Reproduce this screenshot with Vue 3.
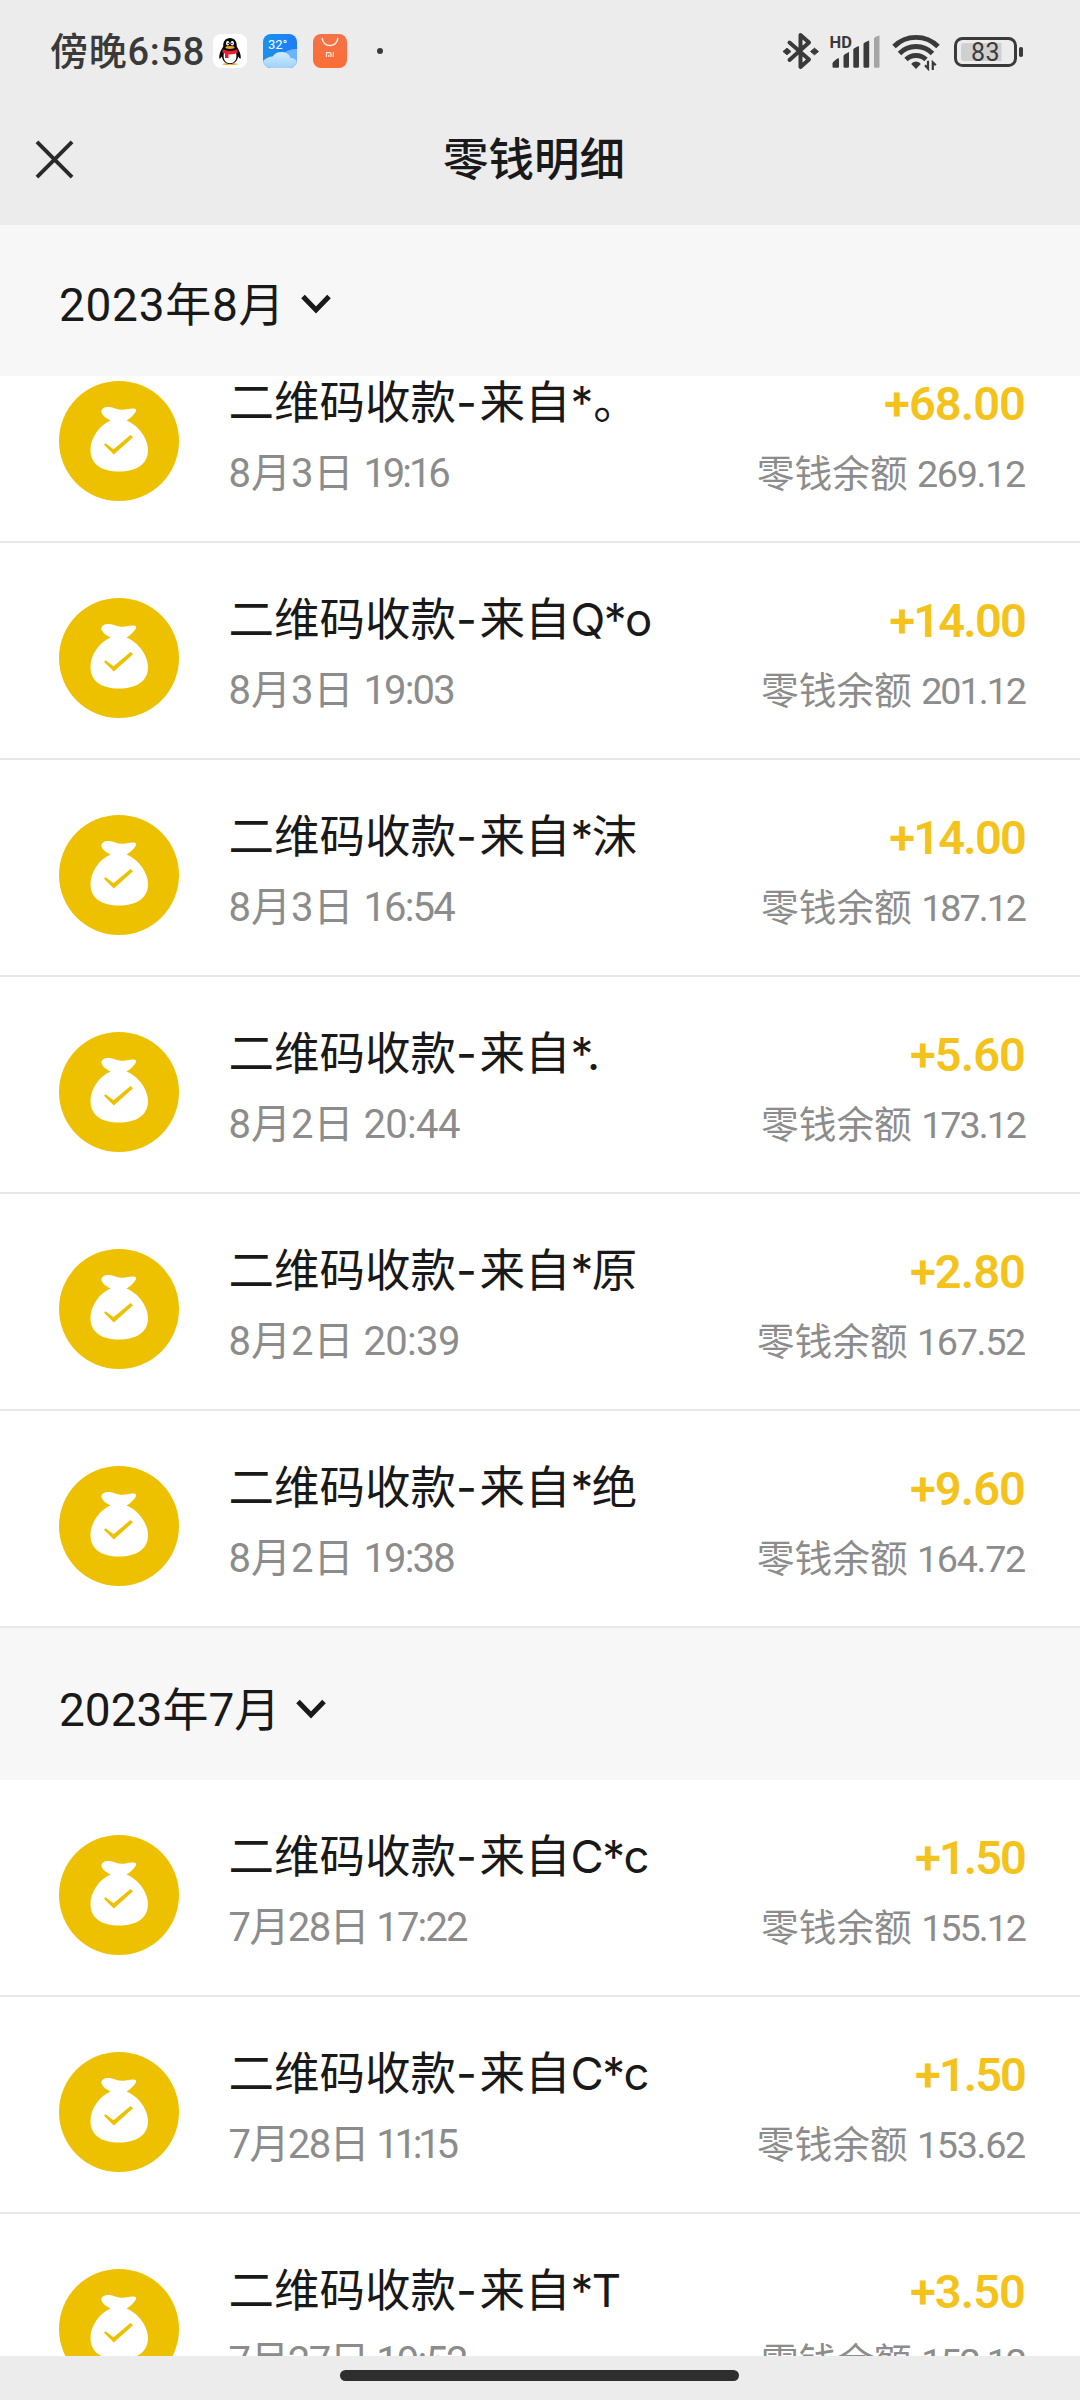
<script setup>
// Keeps the figure "1" narrow by tightening the run in proportion to how many it holds.
const digits = (text, size, narrow = 0.11, base = 0.016) => {
  const ones = (text.match(/1/g) || []).length
  return { letterSpacing: `${(-(ones * size * narrow) / text.length - size * base).toFixed(2)}px` }
}

const august = [
  { payer: '*。', day: '8月3日', time: '19:16', amount: '+68.00', balance: '269.12' },
  { payer: 'Q*o', day: '8月3日', time: '19:03', amount: '+14.00', balance: '201.12' },
  { payer: '*沫', day: '8月3日', time: '16:54', amount: '+14.00', balance: '187.12' },
  { payer: '*.', day: '8月2日', time: '20:44', amount: '+5.60', balance: '173.12' },
  { payer: '*原', day: '8月2日', time: '20:39', amount: '+2.80', balance: '167.52' },
  { payer: '*绝', day: '8月2日', time: '19:38', amount: '+9.60', balance: '164.72' },
]
const july = [
  { payer: 'C*c', day: '7月28日', time: '17:22', amount: '+1.50', balance: '155.12' },
  { payer: 'C*c', day: '7月28日', time: '11:15', amount: '+1.50', balance: '153.62' },
  { payer: '*T', day: '7月27日', time: '19:52', amount: '+3.50', balance: '152.12' },
]
const groups = [
  { id: 8, title: '', rows: august },
  { id: 7, title: '2023年7月', rows: july },
]
</script>

<template>
  <div class="screen">
    <header class="top">
      <div class="status">
        <span class="clock">傍晚6:58</span>
        <svg class="app" viewBox="0 0 34 34">
          <rect width="34" height="34" rx="8" fill="#fff" />
          <path d="M9 30.3q4-2.3 8 0 4-2.3 8 0-3.500 1.400-8 .4-4.500 1-8-.4z" fill="#f5a01a" />
          <path d="M17 4c-4.600 0-7 3.500-6.800 8.500C8 16 6 20 6.200 24c.3 1.400 1.500.2 2.600-1.500C10 28 13 30 17 30s7-2 8.200-7.500c1.100 1.700 2.300 2.900 2.600 1.500.2-4-1.800-8-4-11.500C24 7.500 21.600 4 17 4z" fill="#080808" />
          <path d="M11 18.500C9.500 25 12 29.300 17 29.300s7.500-4.300 6-10.800z" fill="#fff" />
          <path d="M9.800 15.300q7.200 3.500 14.400 0l.6 3.200q-4.500 2.300-9.300 1.800v3.700h-3.500v-4.500l-2.700-1z" fill="#e3202b" />
          <ellipse cx="14.700" cy="9.200" rx="1.700" ry="2.200" fill="#fff" />
          <ellipse cx="19.300" cy="9.200" rx="1.700" ry="2.200" fill="#fff" />
          <circle cx="15.200" cy="9.500" r=".8" fill="#000" />
          <circle cx="18.900" cy="9.500" r=".8" fill="#000" />
          <ellipse cx="17" cy="13.500" rx="4.600" ry="1.400" fill="#f5a623" />
        </svg>
        <svg class="app" viewBox="0 0 34 34">
          <defs>
            <linearGradient id="sky" x1="0" y1="0" x2="1" y2="0">
              <stop offset="0" stop-color="#1a90ee" /><stop offset="1" stop-color="#1d7df6" />
            </linearGradient>
            <linearGradient id="cloud" x1="0" y1="0" x2="0" y2="1">
              <stop offset="0" stop-color="#d3eafd" /><stop offset="1" stop-color="#9fd2fb" />
            </linearGradient>
            <clipPath id="tile"><rect width="34" height="34" rx="8" /></clipPath>
          </defs>
          <g clip-path="url(#tile)">
            <rect width="34" height="34" fill="url(#sky)" />
            <path d="M20 20c3-3.500 8-5 14-5v19H20z" fill="#6cb4fa" />
            <path d="M0 27c3-3 6-4.500 9.500-4.500C12 18.500 16 17.500 20 18c4 .5 6.500 3 7.500 6 3 .2 5 1.500 6.500 3v7H0z" fill="url(#cloud)" />
          </g>
          <text x="5" y="15.300" class="degree">32°</text>
        </svg>
        <svg class="app" viewBox="0 0 34 34">
          <defs>
            <linearGradient id="shop" x1="0" y1="0" x2="0" y2="1">
              <stop offset="0" stop-color="#f37349" /><stop offset="1" stop-color="#fb6d35" />
            </linearGradient>
          </defs>
          <rect width="34" height="34" rx="8" fill="url(#shop)" />
          <path d="M9.300 4.500a7.700 7 0 0 0 15.400 0" fill="none" stroke="#fff1e9" stroke-width="1.500" stroke-linecap="round" />
          <path d="M13.500 23v-4.300h3q1.500 0 1.500 1.500V23M15.800 20.700V23M20.300 18v5" fill="none" stroke="#ffe9de" stroke-width="1.200" />
        </svg>
        <i class="dot"></i>
        <svg class="indicators" viewBox="0 0 244 40" width="244" height="40">
          <path d="M9.500 11.500 29 28.500 20.500 36V4L29 11.500 9.500 29" fill="none" stroke="#3a3a3a" stroke-width="4" stroke-linejoin="round" stroke-linecap="round" />
          <path d="M3 20.500l4-3.300 4 3.300-4 3.300z M30.500 20.500l4-3.300 4 3.300-4 3.300z" fill="#3a3a3a" stroke="#3a3a3a" stroke-width="1" stroke-linejoin="round" />
          <text x="49.500" y="17" class="hd">HD</text>
          <g fill="#3a3a3a">
            <path d="M52.500 32.500q0-2 5.700-5.500.8 0 .8 1.500v7q0 1.300-1.300 1.300h-3.900q-1.300 0-1.300-1.300z" />
            <path d="M63.500 25q0-1.500 5.500-4v14.500q0 1.300-1.300 1.300h-2.900q-1.300 0-1.300-1.300z" />
            <path d="M73.300 18.500q0-1.500 5.700-3.500v20.500q0 1.300-1.300 1.300h-3.100q-1.300 0-1.300-1.300z" />
            <path d="M83.500 13q0-1.500 5.700-3.500v26q0 1.300-1.300 1.300h-3.100q-1.300 0-1.300-1.300z" />
          </g>
          <path d="M94 7.500q0-1.500 5.500-3v31q0 1.300-1.300 1.300h-2.900q-1.300 0-1.300-1.300z" fill="#a5a5a5" />
          <g fill="none" stroke="#3a3a3a" stroke-width="4.900">
            <path d="M114 15.500a31 31 0 0 1 44 0" />
            <path d="M119.500 22.500a23 23 0 0 1 33 0" />
            <path d="M126 28.500a14.500 14.500 0 0 1 20 0" />
          </g>
          <path d="M136 30.500q3.500 0 4.800 2.500L136 38l-4.800-5q1.300-2.500 4.800-2.500z" fill="#3a3a3a" />
          <path d="M145 34.200l3 3.300V29.800M152.800 39V31.300l3 3" fill="none" stroke="#3a3a3a" stroke-width="2.200" />
          <rect x="175.500" y="7.500" width="60" height="27" rx="7" fill="none" stroke="#3a3a3a" stroke-width="3" />
          <path d="M184 12h37.500v18H184q-3 0-3-3V15q0-3 3-3z" fill="#d0d0d0" />
          <text x="205.500" y="29.700" text-anchor="middle" class="level">83</text>
          <rect x="239" y="16" width="4" height="10" rx="1.800" fill="#3a3a3a" />
        </svg>
      </div>
      <div class="nav">
        <svg class="close" viewBox="0 0 40 40"><path d="M2 2 38 38M38 2 2 38" fill="none" stroke="#2a2a2a" stroke-width="4" /></svg>
        <h1>零钱明细</h1>
      </div>
    </header>

    <div class="month pinned">
      <span>2023年8月</span>
      <svg viewBox="0 0 30 20"><path d="M2 2.500 15 16 28 2.500" fill="none" stroke="#191919" stroke-width="5" /></svg>
    </div>

    <main class="list">
      <section v-for="group in groups" :key="group.id">
        <div v-if="group.title" class="month">
          <span>{{ group.title }}</span>
          <svg viewBox="0 0 30 20"><path d="M2 2.500 15 16 28 2.500" fill="none" stroke="#191919" stroke-width="5" /></svg>
        </div>
        <article v-for="(row, i) in group.rows" :key="i" class="row">
          <svg class="bag" viewBox="0 0 120 120">
            <circle cx="60" cy="60" r="60" fill="#edc000" />
            <path d="M51.500 39.500C47 37.500 43.500 34.500 42.500 31.500 41.500 27.500 46 25.500 51 26c5 .6 8 3.200 13 2.800 4.500-.3 8.500-2.200 12-1 2.500 1 .5 4-2 6.500-2.200 2.500-4.500 4.200-6.500 5.200 12.500 5 21.500 18.500 21.500 29.500 0 14-11 21.500-29 21.500S31.500 83 31.500 69c0-12 8.500-24.500 20-29.500z" fill="#fff" />
            <path d="M46.500 62.200 54.500 68.300 71.500 54 74 56.200 54.800 73.500 45 63.800z" fill="#edc000" />
          </svg>
          <div class="info">
            <div class="title">二维码收款<span class="dash">-</span>来自<span :class="{ payer: !/[.。]$/.test(row.payer) }">{{ row.payer }}</span></div>
            <div class="date"><span :class="{ tight: row.day.length > 4 }">{{ row.day + ' ' }}</span><span :style="digits(row.time, 40, 0.15)">{{ row.time }}</span></div>
          </div>
          <div class="money">
            <div class="amount" :style="digits(row.amount, 47, 0.11, 0.02)">{{ row.amount }}</div>
            <div class="balance">零钱余额 <span :style="digits(row.balance, 38)">{{ row.balance }}</span></div>
          </div>
        </article>
      </section>
    </main>

    <footer class="gesture"><i></i></footer>
  </div>
</template>

<style>
body { margin: 0; background: #ececec; }
</style>

<style scoped>
.screen {
  width: 1080px;
  height: 2400px;
  display: flex;
  flex-direction: column;
  overflow: hidden;
  background: #fff;
  color: #191919;
  font-family: Roboto, "Noto Sans CJK SC", sans-serif;
}
.top { height: 225px; flex: none; background: #ececec; }
.status { height: 102px; display: flex; align-items: center; padding-left: 50px; }
.clock { width: 163px; padding-bottom: 5px; font-size: 38px; letter-spacing: .7px; font-weight: 500; color: #3a3a3a; white-space: nowrap; }
.app { width: 34px; height: 34px; margin-right: 16px; flex: none; }
.degree { font: 13px Roboto, sans-serif; fill: #fff; }
.dot { width: 6px; height: 6px; margin-left: 14px; border-radius: 50%; background: #3a3a3a; }
.indicators { margin-left: 397px; }
.hd { font: 700 16.500px Roboto, sans-serif; fill: #3a3a3a; }
.level { font: 400 25px Roboto, sans-serif; fill: #3a3a3a; letter-spacing: .5px; }
.nav { height: 114px; display: grid; grid-template-columns: 1fr 184px 1fr; align-items: center; }
.close { width: 39px; height: 39px; margin-left: 35px; }
h1 { margin: 4px 0 0 -5px; font-size: 45.500px; line-height: 60px; font-weight: 500; white-space: nowrap; }

.month {
  height: 152px;
  box-sizing: border-box;
  display: flex;
  align-items: center;
  gap: 16px;
  padding: 9px 0 0 59px;
  background: #f7f7f7;
  font-size: 46px;
}
.month span { padding-bottom: 6px; }
.month.pinned { height: 151px; flex: none; padding-top: 6px; letter-spacing: .7px; }
.month svg { width: 30px; height: 20px; }

.list { flex: 1; min-height: 0; overflow: hidden; }
.list section:first-child { margin-top: -50px; }
.row {
  height: 217px;
  box-sizing: border-box;
  display: flex;
  align-items: flex-start;
  padding: 0 55px 0 59px;
  border-bottom: 2px solid #e8e8e8;
}
.bag { width: 120px; height: 120px; margin-top: 55px; flex: none; }
.info { margin: 44px 0 0 49.500px; flex: 1; }
.money { margin-top: 45px; text-align: right; }
.title, .amount { height: 66px; line-height: 66px; white-space: nowrap; }
.title { font-family: Inter, "Noto Sans CJK SC", sans-serif; font-size: 45.500px; }
.dash { letter-spacing: 2.500px; }
.payer { letter-spacing: -1.500px; }
.date, .balance { line-height: 60px; margin-top: 8px; white-space: pre; color: #8c8c8c; }
.date { font-size: 40px; }
.tight { letter-spacing: -1.600px; }
.amount { font-size: 47px; font-weight: 600; color: #f4c31b; }
.balance { font-size: 37.700px; margin-top: 7px; }

.gesture { height: 44px; flex: none; display: flex; justify-content: center; background: #ececec; }
.gesture i { width: 399px; height: 11px; margin: 14px 2px 0 0; border-radius: 6px; background: #2e2e2e; }
</style>
